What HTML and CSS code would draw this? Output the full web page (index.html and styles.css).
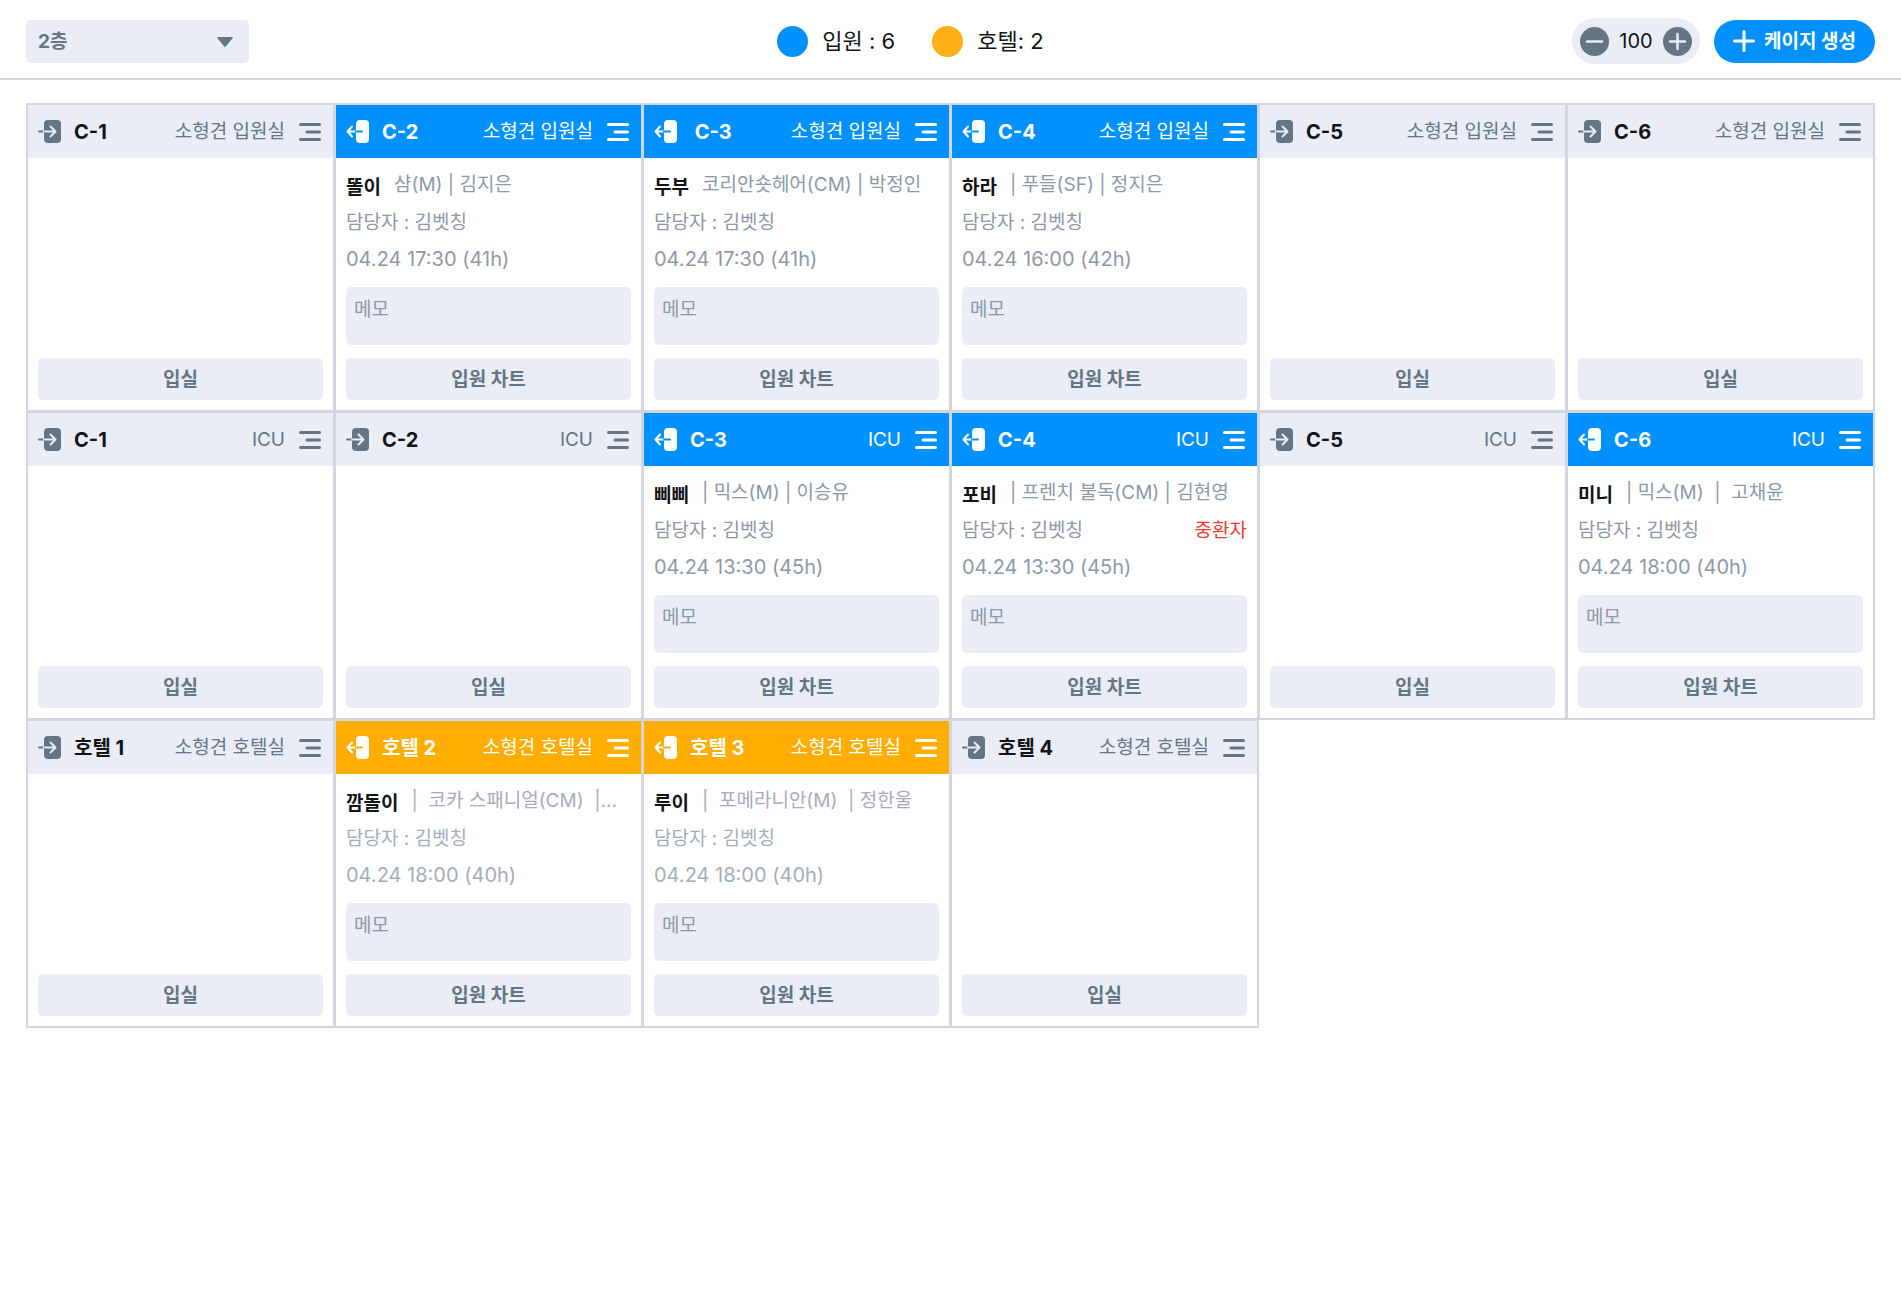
FILE: index.html
```html
<!DOCTYPE html>
<html lang="ko">
<head>
  <meta charset="UTF-8">
  <meta name="viewport" content="width=device-width, initial-scale=1.0">
  <title>케이지 관리</title>
  <link rel="stylesheet" href="styles.css">
</head>
<body>
  <svg class="sprite" aria-hidden="true">
    <symbol id="icon-in" viewBox="0 0 23 23">
      <rect x="6" y="0" width="17" height="23" rx="4" fill="currentColor"/>
      <path d="M1 11.5H6" stroke="currentColor" stroke-width="2" stroke-linecap="round"/>
      <path d="M6 11.5H17M12.500 6.500L17.500 11.500L12.500 16.500" fill="none" stroke="var(--head)" stroke-width="2" stroke-linecap="round" stroke-linejoin="round"/>
    </symbol>
    <symbol id="icon-out" viewBox="0 0 23 23">
      <rect x="10" y="0" width="13" height="23" rx="4" fill="currentColor"/>
      <path d="M10 11.500H1.500M6 6.500L1.500 11.500L6 16.500" fill="none" stroke="currentColor" stroke-width="2" stroke-linecap="round" stroke-linejoin="round"/>
      <path d="M10 11.500H16" stroke="var(--head)" stroke-width="2" stroke-linecap="round"/>
    </symbol>
    <symbol id="icon-menu" viewBox="0 0 22 18">
      <path d="M1.500 1.500H20.500M8 9H20.500M1.500 16.500H20.500" fill="none" stroke="currentColor" stroke-width="3" stroke-linecap="round"/>
    </symbol>
  </svg>

  <header class="toolbar">
    <div class="floor">
      <select id="floor" aria-label="층 선택">
        <option>1층</option>
        <option selected>2층</option>
        <option>3층</option>
      </select>
      <svg class="floor-arrow" viewBox="0 0 16 10"><path d="M1 0H15Q16.500 0 15.500 1.300L9 9.300Q8 10.400 7 9.300L.5 1.300Q-.5 0 1 0Z" fill="currentColor"/></svg>
    </div>
    <div class="legend">
      <span class="legend-item"><i class="dot dot-blue"></i>입원 : 6</span>
      <span class="legend-item"><i class="dot dot-orange"></i>호텔: 2</span>
    </div>
    <div class="actions">
      <div class="zoom">
        <button aria-label="축소"><svg viewBox="0 0 29 29"><circle cx="14.500" cy="14.500" r="14.500" fill="currentColor"/><path d="M7 14.500H22" stroke="#eaedf5" stroke-width="2.500" stroke-linecap="round"/></svg></button>
        <span>100</span>
        <button aria-label="확대"><svg viewBox="0 0 29 29"><circle cx="14.500" cy="14.500" r="14.500" fill="currentColor"/><path d="M7 14.500H22M14.500 7V22" stroke="#eaedf5" stroke-width="2.500" stroke-linecap="round"/></svg></button>
      </div>
      <button class="create"><svg viewBox="0 0 22 22"><path d="M1.500 11H20.500M11 1.500V20.500" stroke="currentColor" stroke-width="3" stroke-linecap="round"/></svg><span>케이지 생성</span></button>
    </div>
  </header>

  <main class="grid" id="cageGrid"></main>

  <script src="script.js"></script>
</body>
</html>
```

FILE: styles.css
```css
* { box-sizing: border-box; }
body { margin: 0; background: #fff; color: #121417; font-family: Inter, "Noto Sans CJK KR", sans-serif; font-size: 19px; line-height: 28px; }
button, select, textarea { font: inherit; color: inherit; border: none; margin: 0; }
button { padding: 0; cursor: pointer; }
svg { display: block; flex: none; }
.sprite { position: absolute; width: 0; height: 0; }

/* toolbar */
.toolbar { display: flex; justify-content: space-between; align-items: center; height: 80px; padding: 4px 26px 0; border-bottom: 2px solid #d3d6e1; }
.floor { position: relative; width: 223px; color: #647585; }
.floor select { appearance: none; display: block; width: 100%; height: 43px; padding: 2px 12px 0; border-radius: 5px; background: #eaedf5; font-weight: 700; }
.floor-arrow { position: absolute; right: 16px; top: 17px; width: 16px; height: 10px; pointer-events: none; }
.legend { display: flex; gap: 37px; font-size: 22px; }
.legend-item { display: flex; align-items: center; gap: 14px; }
.dot { width: 31px; height: 31px; border-radius: 50%; }
.dot-blue { background: #0091ff; }
.dot-orange { background: #ffb019; }
.actions { display: flex; align-items: center; gap: 14px; }
.zoom { display: flex; align-items: center; justify-content: space-between; width: 128px; height: 46px; padding: 0 8px; border-radius: 23px; background: #eaedf5; font-size: 20px; }
.zoom button { color: #647585; background: none; }
.zoom svg { width: 29px; height: 29px; }
.create { display: flex; align-items: center; justify-content: center; gap: 9px; width: 161px; height: 43px; border-radius: 22px; background: #0091ff; color: #fff; font-weight: 700; }
.create svg { width: 22px; height: 22px; }
.create span { padding-top: 2px; }

/* cages: neighbours overlap by 1px so the shared line is 3px */
.grid { display: grid; grid-template-columns: repeat(6, 1fr); grid-auto-rows: 308px; padding: 23px 27px 24px 26px; }
.cage { --head: #eaedf5; display: flex; flex-direction: column; min-width: 0; margin: 0 -1px -1px 0; border: 2px solid #d3d6e1; }
.admitted { --head: #0091ff; }
.hotel { --head: #ffad00; }
.cage-head { flex: none; display: flex; align-items: center; height: 53px; padding: 0 12px 0 10px; background: var(--head); color: #647585; }
.cage-head button { background: none; color: inherit; }
.cage-head h2 { flex: 1; margin: 0 0 0 13px; color: #121417; font-size: 20px; font-weight: 700; }
.icon-door { width: 23px; height: 23px; }
.icon-menu { width: 22px; height: 18px; margin-left: 14px; }
.admitted .cage-head, .hotel .cage-head, .admitted h2, .hotel h2 { color: #fff; }
.cage-body { flex: 1; display: flex; flex-direction: column; padding: 13px 10px 10px; color: #8c99a8; }
.hotel .cage-body { color: #a3aebb; }
.pet, .owner { display: flex; white-space: pre; }
.pet { margin-bottom: 7px; }
.pet strong { padding-top: 3px; margin-right: 13px; color: #121417; font-weight: 700; }
.pet span { overflow: hidden; text-overflow: ellipsis; }
.owner { justify-content: space-between; margin-bottom: 8px; }
.critical { color: #ee3a2c; }
.time { font-size: 20px; }
.cage textarea { display: block; width: 100%; height: 58px; margin-top: 14px; padding: 9px 8px; border-radius: 5px; background: #eaedf5; resize: none; }
.cage textarea::placeholder { color: #8c99a8; opacity: 1; }
.chart { width: 100%; height: 42px; margin-top: auto; padding-top: 2px; border-radius: 5px; background: #eaedf5; color: #647585; font-weight: 700; }
```

FILE: script.js
```js
const MANAGER = '김벳칭';

const cages = [
  { name: 'C-1', room: '소형견 입원실' },
  { name: 'C-2', room: '소형견 입원실', type: 'admitted', pet: '똘이', info: '샴(M) | 김지은', time: '04.24 17:30 (41h)' },
  { name: ' C-3', room: '소형견 입원실', type: 'admitted', pet: '두부', info: '코리안숏헤어(CM) | 박정인', time: '04.24 17:30 (41h)' },
  { name: 'C-4', room: '소형견 입원실', type: 'admitted', pet: '하라', info: '| 푸들(SF) | 정지은', time: '04.24 16:00 (42h)' },
  { name: 'C-5', room: '소형견 입원실' },
  { name: 'C-6', room: '소형견 입원실' },
  { name: 'C-1', room: 'ICU' },
  { name: 'C-2', room: 'ICU' },
  { name: 'C-3', room: 'ICU', type: 'admitted', pet: '삐삐', info: '| 믹스(M) | 이승유', time: '04.24 13:30 (45h)' },
  { name: 'C-4', room: 'ICU', type: 'admitted', pet: '포비', info: '| 프렌치 불독(CM) | 김현영', time: '04.24 13:30 (45h)', critical: true },
  { name: 'C-5', room: 'ICU' },
  { name: 'C-6', room: 'ICU', type: 'admitted', pet: '미니', info: '| 믹스(M)  |  고채윤', time: '04.24 18:00 (40h)' },
  { name: '호텔 1', room: '소형견 호텔실' },
  { name: '호텔 2', room: '소형견 호텔실', type: 'hotel', pet: '깜돌이', info: '|  코카 스패니얼(CM)  |...', time: '04.24 18:00 (40h)' },
  { name: '호텔 3', room: '소형견 호텔실', type: 'hotel', pet: '루이', info: '|  포메라니안(M)  | 정한울', time: '04.24 18:00 (40h)' },
  { name: '호텔 4', room: '소형견 호텔실' }
];

function renderBody(cage) {
  if (!cage.type) {
    return '<button class="chart">입실</button>';
  }
  return `
    <div class="pet"><strong>${cage.pet}</strong><span>${cage.info}</span></div>
    <div class="owner"><span>담당자 : ${MANAGER}</span>${cage.critical ? '<span class="critical">중환자</span>' : ''}</div>
    <div class="time">${cage.time}</div>
    <textarea placeholder="메모" aria-label="${cage.pet} 메모"></textarea>
    <button class="chart">입원 차트</button>`;
}

document.getElementById('cageGrid').innerHTML = cages.map(cage => `
  <section class="cage ${cage.type || ''}">
    <div class="cage-head">
      <button aria-label="${cage.type ? '퇴실' : '입실'}"><svg class="icon-door"><use href="#icon-${cage.type ? 'out' : 'in'}"/></svg></button>
      <h2>${cage.name.replace(/^ /, '&nbsp;')}</h2>
      <span>${cage.room}</span>
      <button aria-label="메뉴"><svg class="icon-menu"><use href="#icon-menu"/></svg></button>
    </div>
    <div class="cage-body">${renderBody(cage)}</div>
  </section>`).join('');
```
